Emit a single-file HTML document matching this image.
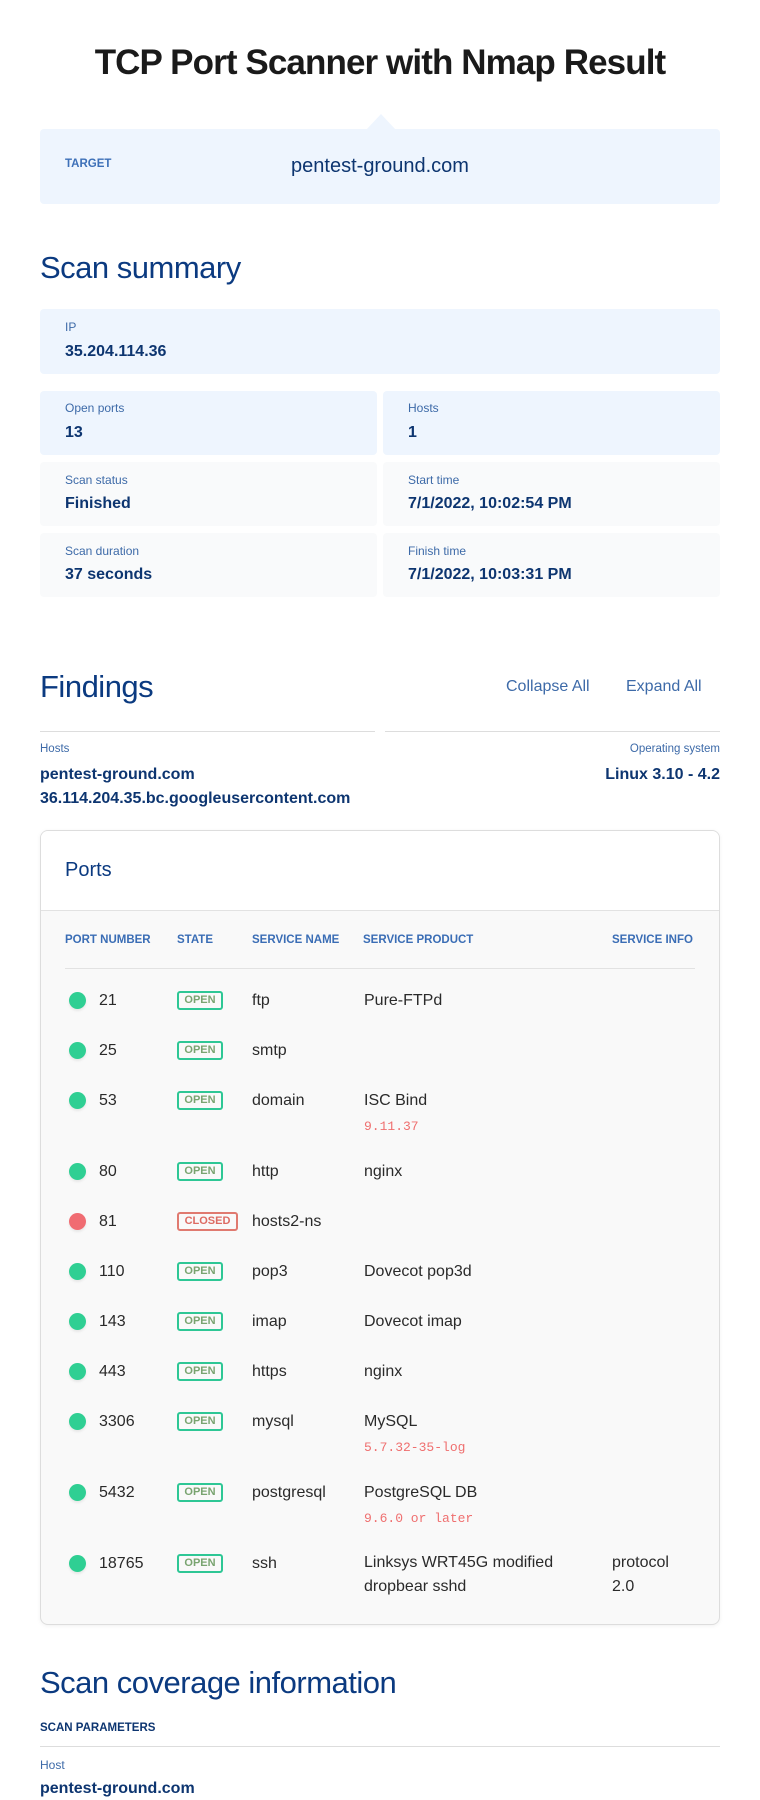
<!DOCTYPE html>
<html><head><meta charset="utf-8"><style>
*{margin:0;padding:0;box-sizing:border-box}
body{width:760px;height:1800px;background:#fff;font-family:"Liberation Sans",sans-serif;position:relative;overflow:hidden;color:#222}
.a{position:absolute;white-space:nowrap}
.h{color:#0b3a80;font-size:31px;letter-spacing:-0.5px}
.lbl{color:#3d6aa8;font-size:12px}
.val{color:#0d3570;font-size:16px;font-weight:bold}
.box{position:absolute;border-radius:4px}
.blue{background:#eef5fe}.grey{background:#f9fafb}
.th{color:#3a6db5;font-size:11.5px;font-weight:bold;top:934px}
.dot{position:absolute;left:69px;width:17px;height:17px;border-radius:50%;background:#2fcf93;box-shadow:0 2px 2px #e8e8e8}
.red{background:#f06c72}
.bd{position:absolute;left:177px;width:46px;height:19px;border:2px solid #2ec795;border-radius:3px;color:#79a470;font-size:11px;font-weight:bold;text-align:center;line-height:15px}
.bc{width:61px;border-color:#e07a70;color:#dd6b63}
.t{position:absolute;font-size:16px;color:#2a2a2a;white-space:nowrap}
.m{position:absolute;font-family:"Liberation Mono",monospace;font-size:13px;color:#ef6f6f;white-space:nowrap}
</style></head><body>
<div class="a" style="left:0;width:760px;text-align:center;top:43px;font-size:35px;font-weight:bold;letter-spacing:-0.9px;color:#1a1a1a">TCP Port Scanner with Nmap Result</div>
<div class="box blue" style="left:40px;top:129px;width:680px;height:75px"></div>
<div class="a" style="left:366px;top:114px;width:0;height:0;border-left:15px solid transparent;border-right:15px solid transparent;border-bottom:16px solid #eef5fe"></div>
<div class="a lbl" style="left:65px;top:158px;font-size:11.5px;font-weight:bold;color:#3d70b8">TARGET</div>
<div class="a" style="left:0;width:760px;text-align:center;top:155px;font-size:20px;color:#0d3570">pentest-ground.com</div>

<div class="a h" style="left:40px;top:250px">Scan summary</div>
<div class="box blue" style="left:40px;top:309px;width:680px;height:65px"></div>
<div class="a lbl" style="left:65px;top:320px">IP</div>
<div class="a val" style="left:65px;top:343px">35.204.114.36</div>

<div class="box blue" style="left:40px;top:391px;width:337px;height:64px"></div>
<div class="box blue" style="left:383px;top:391px;width:337px;height:64px"></div>
<div class="box grey" style="left:40px;top:462px;width:337px;height:64px"></div>
<div class="box grey" style="left:383px;top:462px;width:337px;height:64px"></div>
<div class="box grey" style="left:40px;top:533px;width:337px;height:64px"></div>
<div class="box grey" style="left:383px;top:533px;width:337px;height:64px"></div>
<div class="a lbl" style="left:65px;top:401px">Open ports</div><div class="a val" style="left:65px;top:424px">13</div>
<div class="a lbl" style="left:408px;top:401px">Hosts</div><div class="a val" style="left:408px;top:424px">1</div>
<div class="a lbl" style="left:65px;top:473px">Scan status</div><div class="a val" style="left:65px;top:495px">Finished</div>
<div class="a lbl" style="left:408px;top:473px">Start time</div><div class="a val" style="left:408px;top:495px">7/1/2022, 10:02:54 PM</div>
<div class="a lbl" style="left:65px;top:544px">Scan duration</div><div class="a val" style="left:65px;top:566px">37 seconds</div>
<div class="a lbl" style="left:408px;top:544px">Finish time</div><div class="a val" style="left:408px;top:566px">7/1/2022, 10:03:31 PM</div>

<div class="a h" style="left:40px;top:669px">Findings</div>
<div class="a" style="left:506px;top:678px;font-size:16px;color:#3d6aa8">Collapse All</div>
<div class="a" style="left:626px;top:678px;font-size:16px;color:#3d6aa8">Expand All</div>
<div class="a" style="left:40px;top:731px;width:335px;height:1px;background:#ddd"></div>
<div class="a" style="left:385px;top:731px;width:335px;height:1px;background:#ddd"></div>
<div class="a lbl" style="left:40px;top:743px;font-size:11.5px">Hosts</div>
<div class="a lbl" style="right:40px;top:743px;font-size:11.5px">Operating system</div>
<div class="a val" style="left:40px;top:766px">pentest-ground.com</div>
<div class="a val" style="left:40px;top:790px">36.114.204.35.bc.googleusercontent.com</div>
<div class="a val" style="right:40px;top:766px">Linux 3.10 - 4.2</div>

<div class="a" style="left:40px;top:830px;width:680px;height:795px;border:1px solid #ddd;border-radius:8px;background:#f9f9f9;box-shadow:0 1px 4px rgba(0,0,0,.06);overflow:hidden">
<div style="height:80px;background:#fff;border-bottom:1px solid #e2e2e2"></div></div>
<div class="a" style="left:65px;top:859px;font-size:20px;color:#0b3a80">Ports</div>
<div class="a th" style="left:65px">PORT NUMBER</div>
<div class="a th" style="left:177px">STATE</div>
<div class="a th" style="left:252px">SERVICE NAME</div>
<div class="a th" style="left:363px">SERVICE PRODUCT</div>
<div class="a th" style="left:612px">SERVICE INFO</div>
<div class="a" style="left:65px;top:968px;width:630px;height:1px;background:#e2e2e2"></div>

<div class="dot" style="top:992px"></div><div class="t" style="left:99px;top:992px">21</div><div class="bd" style="top:991px">OPEN</div><div class="t" style="left:252px;top:992px">ftp</div><div class="t" style="left:364px;top:992px">Pure-FTPd</div>
<div class="dot" style="top:1042px"></div><div class="t" style="left:99px;top:1042px">25</div><div class="bd" style="top:1041px">OPEN</div><div class="t" style="left:252px;top:1042px">smtp</div>
<div class="dot" style="top:1092px"></div><div class="t" style="left:99px;top:1092px">53</div><div class="bd" style="top:1091px">OPEN</div><div class="t" style="left:252px;top:1092px">domain</div><div class="t" style="left:364px;top:1092px">ISC Bind</div><div class="m" style="left:364px;top:1119px">9.11.37</div>
<div class="dot" style="top:1163px"></div><div class="t" style="left:99px;top:1163px">80</div><div class="bd" style="top:1162px">OPEN</div><div class="t" style="left:252px;top:1163px">http</div><div class="t" style="left:364px;top:1163px">nginx</div>
<div class="dot red" style="top:1213px"></div><div class="t" style="left:99px;top:1213px">81</div><div class="bd bc" style="top:1212px">CLOSED</div><div class="t" style="left:252px;top:1213px">hosts2-ns</div>
<div class="dot" style="top:1263px"></div><div class="t" style="left:99px;top:1263px">110</div><div class="bd" style="top:1262px">OPEN</div><div class="t" style="left:252px;top:1263px">pop3</div><div class="t" style="left:364px;top:1263px">Dovecot pop3d</div>
<div class="dot" style="top:1313px"></div><div class="t" style="left:99px;top:1313px">143</div><div class="bd" style="top:1312px">OPEN</div><div class="t" style="left:252px;top:1313px">imap</div><div class="t" style="left:364px;top:1313px">Dovecot imap</div>
<div class="dot" style="top:1363px"></div><div class="t" style="left:99px;top:1363px">443</div><div class="bd" style="top:1362px">OPEN</div><div class="t" style="left:252px;top:1363px">https</div><div class="t" style="left:364px;top:1363px">nginx</div>
<div class="dot" style="top:1413px"></div><div class="t" style="left:99px;top:1413px">3306</div><div class="bd" style="top:1412px">OPEN</div><div class="t" style="left:252px;top:1413px">mysql</div><div class="t" style="left:364px;top:1413px">MySQL</div><div class="m" style="left:364px;top:1440px">5.7.32-35-log</div>
<div class="dot" style="top:1484px"></div><div class="t" style="left:99px;top:1484px">5432</div><div class="bd" style="top:1483px">OPEN</div><div class="t" style="left:252px;top:1484px">postgresql</div><div class="t" style="left:364px;top:1484px">PostgreSQL DB</div><div class="m" style="left:364px;top:1511px">9.6.0 or later</div>
<div class="dot" style="top:1555px"></div><div class="t" style="left:99px;top:1555px">18765</div><div class="bd" style="top:1554px">OPEN</div><div class="t" style="left:252px;top:1555px">ssh</div><div class="t" style="left:364px;line-height:24px;top:1551px">Linksys WRT45G modified<br>dropbear sshd</div><div class="t" style="left:612px;top:1551px;line-height:24px">protocol<br>2.0</div>

<div class="a h" style="left:40px;top:1665px">Scan coverage information</div>
<div class="a" style="left:40px;top:1722px;font-size:11.5px;font-weight:bold;color:#0d3570">SCAN PARAMETERS</div>
<div class="a" style="left:40px;top:1746px;width:680px;height:1px;background:#ddd"></div>
<div class="a lbl" style="left:40px;top:1758px">Host</div>
<div class="a val" style="left:40px;top:1780px">pentest-ground.com</div>
</body></html>
